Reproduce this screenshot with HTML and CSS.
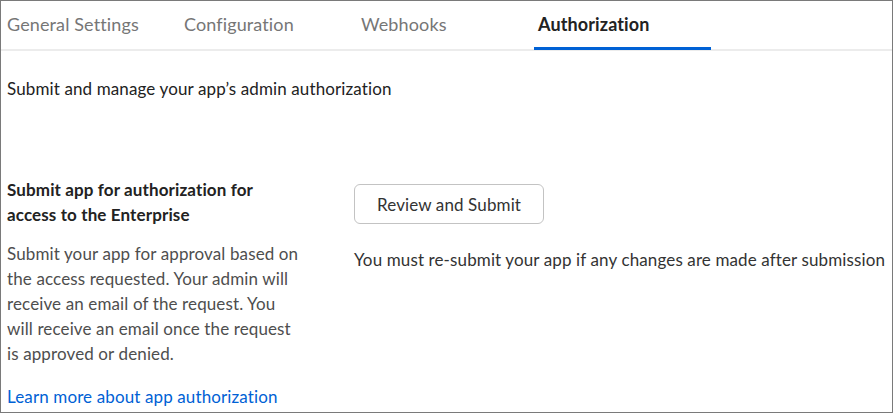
FILE: index.html
```html
<!DOCTYPE html>
<html>
<head>
    <title>App Authorization</title>
    <link rel="stylesheet" href="styles.css">
</head>
<body>
    <div class="frame">
        <div class="tabs">
            <div class="tab">General Settings</div>
            <div class="tab">Configuration</div>
            <div class="tab">Webhooks</div>
            <div class="tab active">Authorization</div>
        </div>

        <p class="intro">Submit and manage your app’s admin authorization</p>

        <div class="section">
            <div class="side">
                <h2>Submit app for authorization for access to the Enterprise</h2>
                <p class="desc">Submit your app for approval based on the access requested. Your admin will receive an email of the request. You will receive an email once the request is approved or denied.</p>
                <a class="learn" href="#">Learn more about app authorization</a>
            </div>
            <div class="main">
                <button class="btn">Review and Submit</button>
                <p class="note">You must re-submit your app if any changes are made after submission</p>
            </div>
        </div>
    </div>
</body>
</html>
```

FILE: styles.css
```css
body {
    margin: 0;
    font-family: Lato, "Open Sans", sans-serif;
    letter-spacing: 0.12px;
    background-color: #fff;
    color: #222;
}

.frame {
    width: 893px;
    height: 413px;
    box-sizing: border-box;
    border: 1px solid #7a7a7a;
    overflow: hidden;
}

/* tab bar */
.tabs {
    display: flex;
    padding-left: 2px;
    border-bottom: 2px solid #ececec;
}

.tab {
    width: 177px;
    padding: 0 4px;
    box-sizing: border-box;
    height: 48px;
    line-height: 46px;
    font-size: 18px;
    color: #767676;
}

.tab.active {
    color: #222;
    font-weight: bold;
    border-bottom: 3px solid #0061d5;
    margin-bottom: -2px;
    height: 49px;
}

.intro {
    margin: 27px 0 0 6px;
    font-size: 17px;
}

.section {
    display: flex;
    margin-top: 78px;
    padding-left: 6px;
}

.side {
    width: 292px;
    flex: none;
}

.side h2 {
    margin: 0;
    font-size: 17px;
    line-height: 25px;
    font-weight: bold;
    color: #222;
}

.desc {
    margin: 14px 0 0;
    font-size: 17px;
    line-height: 25px;
    color: #4e4e4e;
}

.learn {
    display: block;
    margin-top: 20px;
    font-size: 17px;
    color: #0061d5;
    text-decoration: none;
}

.main {
    margin-left: 55px;
    padding-top: 7px;
}

.btn {
    height: 40px;
    padding: 0 22px;
    font-family: inherit;
    font-size: 17px;
    letter-spacing: 0.12px;
    color: #333;
    background-color: #fff;
    border: 1px solid #c3c3c3;
    border-radius: 6px;
}

.note {
    margin: 25px 0 0;
    font-size: 17px;
    color: #333;
}
```
